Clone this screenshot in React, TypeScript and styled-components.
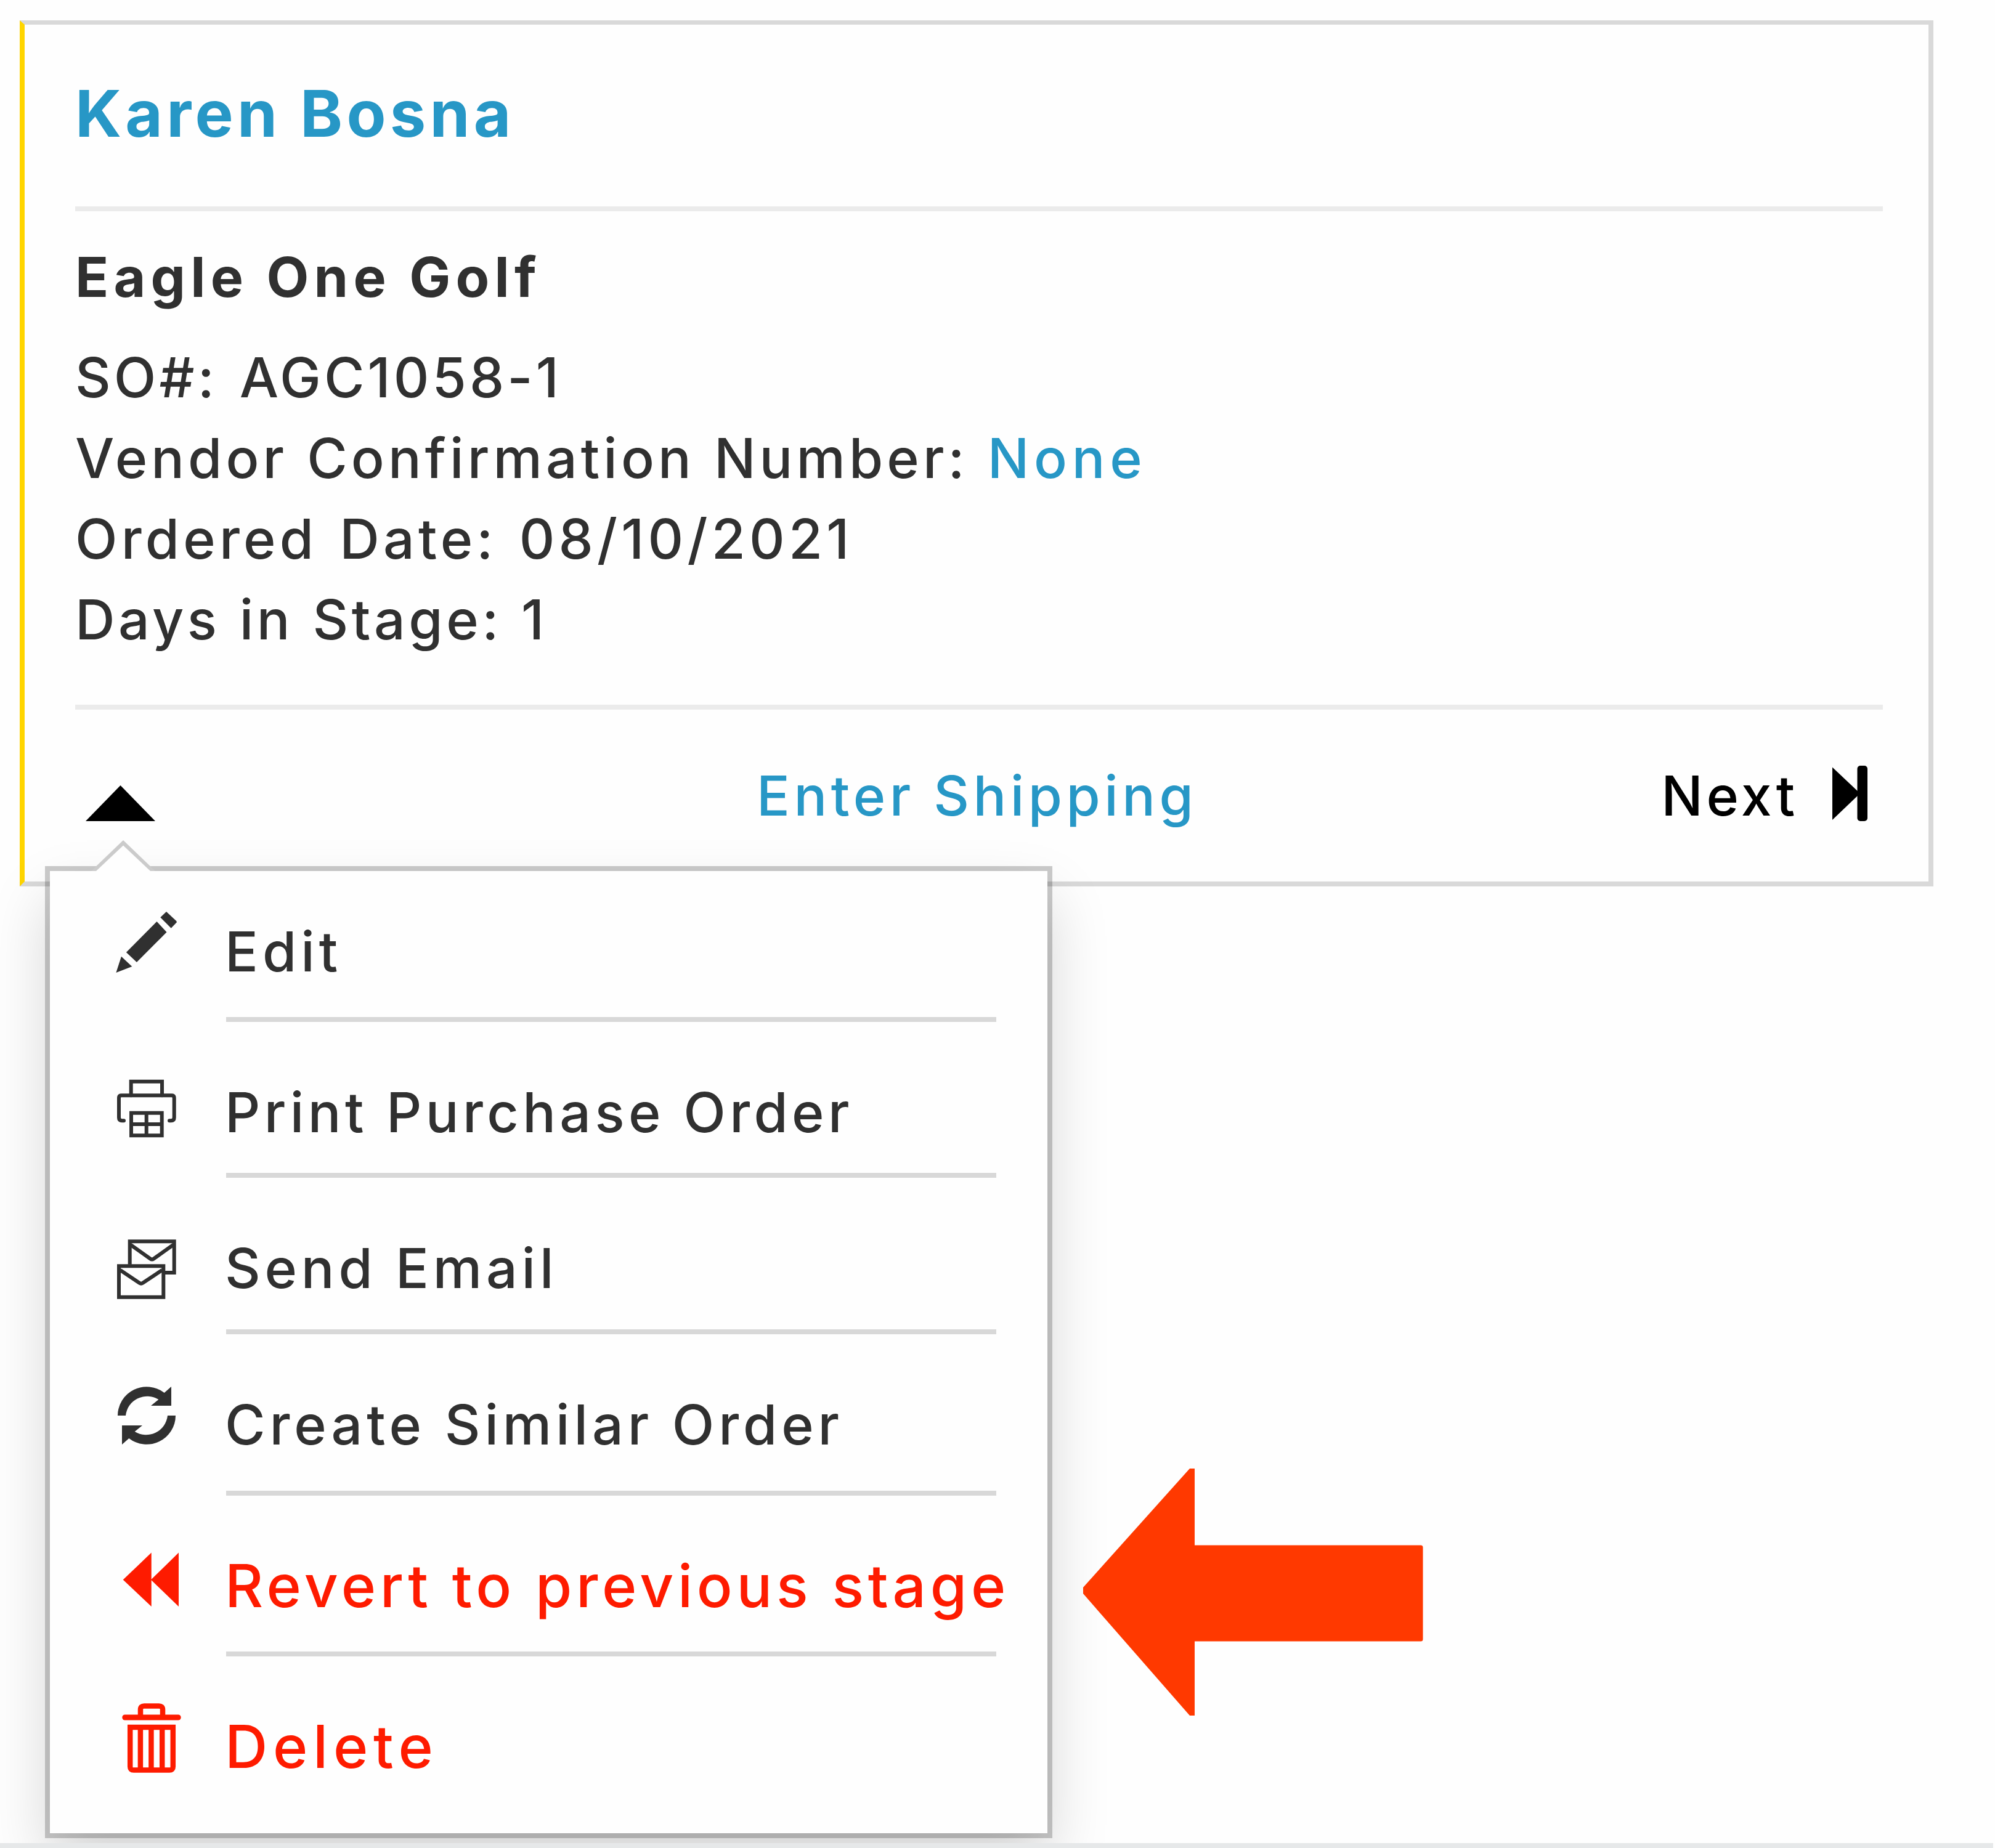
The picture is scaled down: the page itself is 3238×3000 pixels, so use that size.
import { ReactNode } from 'react';
import styled, { createGlobalStyle } from 'styled-components';

const GlobalStyle = createGlobalStyle`
  * {
    box-sizing: border-box;
  }

  body {
    margin: 0;
    background: #fefefe;
    font-family: Inter, 'Liberation Sans', sans-serif;
  }
`;

const Page = styled.div`
  position: relative;
  display: flex;
  flex-direction: column;
  justify-content: space-between;
  width: 3238px;
  height: 3000px;
  padding-top: 33px;
  overflow: hidden;
  color: #303030;
  font-size: 89.4px;
  font-weight: 500;
  line-height: 131px;
  white-space: nowrap;
`;

const Card = styled.section`
  width: 3106px;
  height: 1406px;
  margin-left: 32px;
  padding: 0 74px 0 82px;
  border: 8px solid #d9d9d9;
  border-top-width: 7px;
  border-left-color: #ffd500;
`;

const CardHeader = styled.header`
  padding: 84px 0 91px;
  border-bottom: 8px solid #ebebeb;
`;

const CustomerName = styled.h2`
  margin: 0;
  font-size: 104.5px;
  font-weight: 700;
  line-height: 120px;
  letter-spacing: 6.2px;
  color: #2797c6;
`;

const CardBody = styled.div`
  padding: 42px 0 73px;
  border-bottom: 8px solid #ebebeb;
`;

const VendorName = styled.h3`
  margin: 0 0 32px;
  font-size: 89.4px;
  font-weight: 700;
  line-height: 130px;
  letter-spacing: 8.2px;
`;

const Detail = styled.div`
  height: 131px;
`;

const Text = styled.span<{ $tracking: number; $wordGap?: number }>`
  letter-spacing: ${({ $tracking }) => $tracking}px;
  word-spacing: ${({ $wordGap = 0 }) => $wordGap}px;
`;

const Link = styled.a<{ $tracking: number }>`
  color: #2797c6;
  letter-spacing: ${({ $tracking }) => $tracking}px;
`;

const CardFooter = styled.footer`
  display: grid;
  grid-template-columns: 1106px 1fr auto;
  align-items: start;
  padding: 74px 25px 0 0;
  color: #000;
`;

const Caret = styled.svg`
  width: 113px;
  height: 58px;
  margin: 49px 0 0 17px;
`;

const NextButton = styled.div`
  display: flex;
  align-items: flex-start;
  gap: 55px;

  svg {
    width: 57px;
    height: 90px;
    margin-top: 17px;
  }
`;

const Menu = styled.ul`
  position: absolute;
  top: 1414px;
  left: 81px;
  width: 1619px;
  height: 1562px;
  margin: 0;
  padding: 65px 0 0 107px;
  list-style: none;
  background: #fefefe;
  box-shadow: 0 0 0 8px rgba(0, 0, 0, 0.2), 0 46px 92px rgba(0, 0, 0, 0.175);
`;

const MenuPointer = styled.svg`
  position: absolute;
  top: -50px;
  left: 67px;
  width: 104px;
  height: 50px;
`;

const MenuItem = styled.li<{ $danger?: boolean }>`
  display: flex;
  margin-bottom: 81px;
  color: ${({ $danger }) => ($danger ? '#fe1b00' : '#303030')};
  font-size: ${({ $danger }) => ($danger ? 96 : 89.4)}px;
`;

const MenuIcon = styled.svg`
  flex: none;
  width: 110px;
  height: 131px;
  margin-right: 69px;
  overflow: visible;
`;

const MenuLabel = styled.div<{ $space: number; $tracking: number }>`
  width: 1250px;
  padding-bottom: ${({ $space }) => $space}px;
  border-bottom: ${({ $space }) => ($space ? '8px solid #d8d8d8' : 'none')};
  letter-spacing: ${({ $tracking }) => $tracking}px;
  text-indent: -2px;
`;

const Callout = styled.svg`
  position: absolute;
  top: 2384px;
  left: 1758px;
  width: 552px;
  height: 401px;
`;

const NextCardEdge = styled.div`
  position: relative;
  z-index: 1;
  width: 3235px;
  height: 8px;
  background: #e6e8e9;
`;

const PencilIcon = (
  <g fill="currentColor">
    <path d="M82 1 72.3 10.3 89.7 27.7 98.6 18.5V16.5Z" />
    <path d="M66.5 17 82.5 34.3 33.9 83 16.9 67Z" />
    <path d="M8.9 73.7 26.3 90 .4 100Z" />
  </g>
);

const PrinterIcon = (
  <g fill="none" stroke="currentColor" strokeWidth="6" strokeLinecap="round">
    <path d="M24.7 38.3V15.7H75V38.3" />
    <path d="M13 79.3H10Q5 79.3 5 74.3V42.3Q5 38.3 9 38.3H90.7Q94.7 38.3 94.7 42.3V74.3Q94.7 79.3 89.7 79.3H87" />
    <path d="M25 66.7H74.7V103.3H25ZM49.7 66.7V103.3M25 85H74.7" />
  </g>
);

const MailIcon = (
  <g fill="none" stroke="currentColor" strokeWidth="6">
    <path d="M22.7 59.7V22.3H94.7V73H78.7" />
    <path d="M24 27.7 56 50.5Q58.7 52.4 61.4 50.5L93.3 27.7" />
    <path d="M5 62.3H77.3V112.7H5Z" />
    <path d="M7 68.7 38.3 89.8Q41 91.6 43.7 89.8L75.3 68.7" />
  </g>
);

const RefreshIcon = (
  <g fill="currentColor">
    <path d="M3 51A47 47 0 0 1 78.7 14L90 4V35H57L69.3 25A35 35 0 0 0 16 51Z" />
    <path
      d="M3 51A47 47 0 0 1 78.7 14L90 4V35H57L69.3 25A35 35 0 0 0 16 51Z"
      transform="rotate(180 50 51)"
    />
  </g>
);

const RewindIcon = <path d="M11.7 55.6 57.7 11.6V99ZM57 55.6 102 11.6V99Z" fill="currentColor" />;

const TrashIcon = (
  <g fill="none" stroke="currentColor" strokeWidth="8.5">
    <path d="M14.8 18H101.2" strokeWidth="9" strokeLinecap="round" />
    <path d="M40 15V5Q40-.6 46-.6H70Q76-.6 76 5V15" />
    <path d="M23.2 33.9H92.8V98Q92.8 103.6 87 103.6H29Q23.2 103.6 23.2 98Z" />
    <path d="M39.9 33V103M57.4 33V103M75.2 33V103" />
  </g>
);

interface Action {
  label: string;
  icon: ReactNode;
  space: number;
  tracking: number;
  danger?: boolean;
}

const actions: Action[] = [
  { label: 'Edit', icon: PencilIcon, space: 41, tracking: 7 },
  { label: 'Print Purchase Order', icon: PrinterIcon, space: 33, tracking: 6.4 },
  { label: 'Send Email', icon: MailIcon, space: 34, tracking: 6.8 },
  { label: 'Create Similar Order', icon: RefreshIcon, space: 42, tracking: 6.9 },
  { label: 'Revert to previous stage', icon: RewindIcon, space: 41, tracking: 6.65, danger: true },
  { label: 'Delete', icon: TrashIcon, space: 0, tracking: 8.7, danger: true },
];

function App() {
  return (
    <>
      <GlobalStyle />
      <Page>
        <Card>
          <CardHeader>
            <CustomerName>Karen Bosna</CustomerName>
          </CardHeader>

          <CardBody>
            <VendorName>Eagle One Golf</VendorName>
            <Detail>
              <Text $tracking={5.1} $wordGap={7}>SO#: AGC1058-1</Text>
            </Detail>
            <Detail>
              <Text $tracking={6.1} $wordGap={1}>Vendor Confirmation Number: </Text>
              <Link $tracking={7.7}>None</Link>
            </Detail>
            <Detail>
              <Text $tracking={6.2} $wordGap={6}>Ordered Date: 08/10/2021</Text>
            </Detail>
            <Detail>
              <Text $tracking={5.5} $wordGap={2}>Days in Stage: 1</Text>
            </Detail>
          </CardBody>

          <CardFooter>
            <Caret viewBox="0 0 113 58">
              <path d="M0 58 56.5 0 113 58Z" />
            </Caret>
            <Link $tracking={6.5}>Enter Shipping</Link>
            <NextButton>
              <Text $tracking={5.7}>Next</Text>
              <svg viewBox="0 0 57 90">
                <path d="M0 2.5 45 45 0 88Z" />
                <rect x="40.5" width="16.5" height="90" rx="5" />
              </svg>
            </NextButton>
          </CardFooter>
        </Card>

        <Menu>
          <MenuPointer viewBox="0 0 104 50">
            <path d="M0 50 52 0 104 50Z" fill="#cbcbcb" />
            <path d="M8 50 52 8.5 96 50Z" fill="#fefefe" />
          </MenuPointer>
          {actions.map((action) => (
            <MenuItem key={action.label} $danger={action.danger}>
              <MenuIcon viewBox="0 0 110 131">{action.icon}</MenuIcon>
              <MenuLabel $space={action.space} $tracking={action.tracking}>
                {action.label}
              </MenuLabel>
            </MenuItem>
          ))}
        </Menu>

        <Callout viewBox="0 0 552 401">
          <path
            d="M0 193 173 0H181V124.5H548Q551.5 124.5 551.5 128V277Q551.5 280.5 548 280.5H181V401H173L0 203Z"
            fill="#ff3900"
          />
        </Callout>

        <NextCardEdge />
      </Page>
    </>
  );
}

export default App;
